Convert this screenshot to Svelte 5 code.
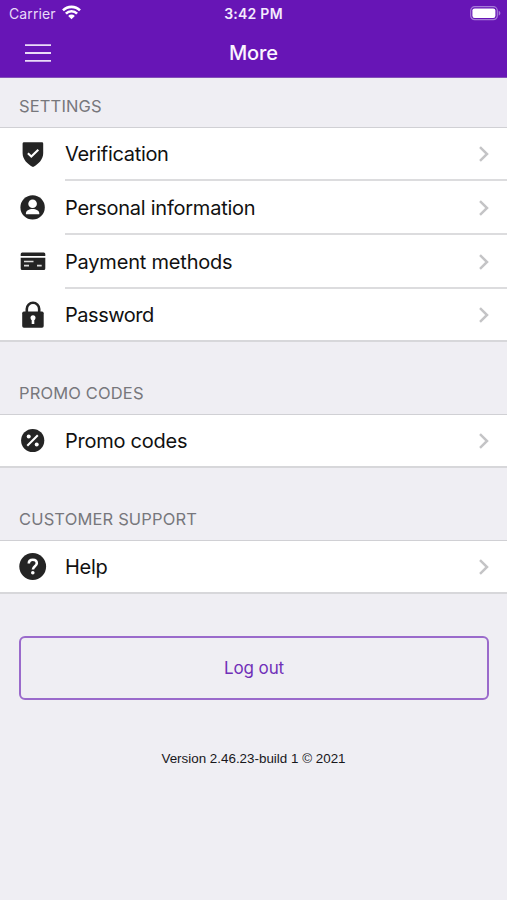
<script>
  const sections = [
    {
      title: 'Settings',
      items: [
        { icon: 'shield', label: 'Verification', spacing: -0.32 },
        { icon: 'person', label: 'Personal information', spacing: -0.24 },
        { icon: 'card', label: 'Payment methods', spacing: -0.2 },
        { icon: 'lock', label: 'Password', spacing: -0.47 }
      ]
    },
    {
      title: 'Promo codes',
      items: [{ icon: 'percent', label: 'Promo codes', spacing: -0.25 }]
    },
    {
      title: 'Customer support',
      items: [{ icon: 'help', label: 'Help', spacing: -0.25 }]
    }
  ];
</script>

<main>
  <header>
    <div class="status">
      <div class="carrier">
        <span>Carrier</span>
        <svg width="19" height="15" viewBox="0 0 19 15" fill="none" stroke="#fff" stroke-width="2.6">
          <path d="M1 5.4a12 12 0 0 1 17 0" />
          <path d="M3.9 8.6a7.9 7.9 0 0 1 11.2 0" />
          <path d="M6.2 11a4.6 4.6 0 0 1 6.6 0L9.5 14.3z" fill="#fff" stroke="none" />
        </svg>
      </div>
      <span class="time">3:42 PM</span>
      <svg class="battery" width="31" height="15" viewBox="0 0 31 15">
        <rect x="0.7" y="0.7" width="26.6" height="13" rx="4" fill="none" stroke="#a67bd8" stroke-width="1.2" />
        <rect x="2.4" y="2.4" width="23" height="9.6" rx="2.2" fill="#fff" />
        <path d="M28.7 4.8c2.2.8 2.2 4 0 4.8z" fill="#a67bd8" />
      </svg>
    </div>
    <nav>
      <button class="menu" aria-label="Menu">
        <svg width="26" height="18" viewBox="0 0 26 18" stroke="#eadcf8" stroke-width="1.8">
          <path d="M0 1.2h26M0 9h26M0 16.8h26" />
        </svg>
      </button>
      <h1>More</h1>
    </nav>
  </header>

  {#each sections as section}
    <section>
      <h2>{section.title}</h2>
      <ul>
        {#each section.items as item}
          <li>
            <svg class="icon" width="28" height="28" viewBox="0 0 28 28" fill="#242424">
              {#if item.icon === 'shield'}
                <path d="M4.6 1.2H23a1.2 1.2 0 0 1 1.2 1.2v9.8c0 6-4.8 11.2-10.2 13.7C8.6 23.4 3.6 18.2 3.6 12.2V2.4a1.2 1.2 0 0 1 1-1.2z" />
                <path d="m8.900 12.300 3.400 3.200 7-6.800" fill="none" stroke="#fff" stroke-width="2.1" />
              {:else if item.icon === 'person'}
                <circle cx="13.6" cy="13.4" r="12.2" />
                <circle cx="13.6" cy="9.700" r="4.3" fill="#fff" />
                <path d="M6.9 20.200v-.7c0-3.100 3.200-4.600 6.700-4.600s6.700 1.500 6.700 4.600v.7z" fill="#fff" />
              {:else if item.icon === 'card'}
                <path d="M3.2 4.400h21.600a1.500 1.500 0 0 1 1.500 1.500v2H1.700v-2a1.500 1.500 0 0 1 1.500-1.500zM1.700 9.700h24.600v10.800a1.500 1.500 0 0 1-1.500 1.500H3.200a1.500 1.500 0 0 1-1.500-1.500z" />
                <path d="M5 13.500h9.500M5 17.600h5M18 17.600h4.700" stroke="#ddd" stroke-width="1.6" />
              {:else if item.icon === 'lock'}
                <path d="M7.8 12.500V8a6.200 6.200 0 0 1 12.400 0v4.500" fill="none" stroke="#242424" stroke-width="2.6" />
                <rect x="3.2" y="10.500" width="21.500" height="16.300" rx="1.700" />
                <circle cx="14" cy="16.700" r="2.500" fill="#fff" />
                <path d="M12.700 16.700h2.600v6.300h-2.600z" fill="#fff" />
              {:else if item.icon === 'percent'}
                <circle cx="13.7" cy="13.5" r="11.600" />
                <path d="m8.300 18.800 10.500-10.500" stroke="#fff" stroke-width="2" />
                <circle cx="9.700" cy="9.500" r="2" fill="#fff" />
                <circle cx="17.700" cy="17.500" r="2" fill="#fff" />
              {:else}
                <circle cx="13.700" cy="13.500" r="13.400" />
                <path d="M9.800 10.600c0-2.500 1.700-3.800 4-3.800s4 1.400 4 3.500c0 3-3.900 2.900-3.900 6.300" fill="none" stroke="#fff" stroke-width="2.600" />
                <circle cx="13.800" cy="19.700" r="1.800" fill="#fff" />
              {/if}
            </svg>
            <div class="row">
              <span style="letter-spacing: {item.spacing}px">{item.label}</span>
              <svg width="12" height="18" viewBox="0 0 12 18" fill="none" stroke="#c4c4c6" stroke-width="2.5">
                <path d="m2 2.200 7 6.800-7 6.800" />
              </svg>
            </div>
          </li>
        {/each}
      </ul>
    </section>
  {/each}

  <button class="logout">Log out</button>
  <p class="version">Version 2.46.23-build 1 © 2021</p>
</main>

<style>
:global(body) {
  margin: 0;
  background: #efeef3;
}
main {
  display: flex;
  flex-direction: column;
  height: 900px;
  overflow: hidden;
  background: #efeef3;
  font-family: Inter, 'Liberation Sans', sans-serif;
}
header {
  box-sizing: border-box;
  height: 78px;
  background: #6715b6;
  border-bottom: 1px solid #8350b8;
  color: #fff;
}
.status {
  display: grid;
  grid-template-columns: 1fr auto 1fr;
  align-items: center;
  height: 27px;
  padding: 0 6px 0 9px;
}
.carrier {
  display: flex;
  align-items: center;
  gap: 6px;
  font-size: 14px;
  letter-spacing: 0.1px;
  color: #e9daf8;
}
.carrier svg {
  margin-top: -2px;
}
.time {
  margin-right: 3px;
  font-size: 14px;
  font-weight: 600;
  letter-spacing: 0.25px;
  color: #f4eafd;
}
.battery {
  justify-self: end;
}
nav {
  display: grid;
  grid-template-columns: 1fr auto 1fr;
  align-items: center;
  height: 51px;
}
.menu {
  display: flex;
  width: 26px;
  margin-left: 25px;
  padding: 0;
  border: 0;
  background: none;
}
h1 {
  margin: 0;
  font-size: 20px;
  font-weight: 500;
  letter-spacing: -0.1px;
  color: #faf5ff;
}
h2 {
  box-sizing: border-box;
  height: 72px;
  margin: 0;
  padding: 39px 19px 0;
  font-size: 16.5px;
  font-weight: 400;
  line-height: 24px;
  text-transform: uppercase;
  letter-spacing: 0.15px;
  color: #77777c;
}
section:first-of-type h2 {
  height: 49px;
  padding-top: 16px;
}
ul {
  margin: 0;
  padding: 0;
  list-style: none;
  background: #fff;
  border-top: 1px solid #d0d0d4;
  border-bottom: 2px solid #d7d7da;
}
li {
  display: flex;
  align-items: center;
  padding-left: 19px;
}
.icon {
  flex: none;
  margin-right: 18px;
}
.row {
  box-sizing: border-box;
  display: flex;
  flex: 1;
  align-items: center;
  justify-content: space-between;
  height: 54px;
  padding: 1px 17px 0 0;
  border-bottom: 2px solid #dcdcde;
  font-size: 20px;
  color: #111;
}
li:first-child .row {
  height: 53px;
}
li:last-child .row {
  height: 51px;
  border-bottom: 0;
}
.logout {
  height: 64px;
  margin: 42px 18px 0 19px;
  border: 2px solid #9a6acb;
  border-radius: 6px;
  background: none;
  font-family: inherit;
  font-size: 17px;
  letter-spacing: -0.1px;
  color: #7130b8;
}
.version {
  margin: 49px 0 0;
  text-align: center;
  font-family: 'Liberation Sans', sans-serif;
  font-size: 13.4px;
  line-height: 20px;
  color: #17171b;
}
</style>
